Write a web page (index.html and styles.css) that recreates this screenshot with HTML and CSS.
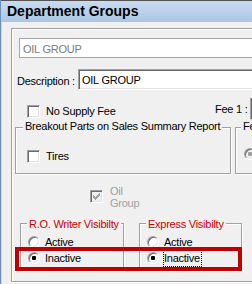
FILE: index.html
```html
<!DOCTYPE html>
<html lang="en">
<head>
    <meta charset="UTF-8" />
    <link rel="stylesheet" href="styles.css">
    <title>Department Groups</title>
</head>
<body>
    <div class="window">
        <div class="titlebar">Department Groups</div>
        <div class="client">
            <div class="panel">
                <div class="field field-disabled code-field">OIL GROUP</div>

                <div class="row desc-row">
                    <span class="desc-label">Description :</span>
                    <div class="field desc-field">OIL GROUP</div>
                </div>

                <div class="row fee-row">
                    <label class="check supply-check"><span class="box"></span>No Supply Fee</label>
                    <span class="fee-label">Fee 1 :</span>
                    <div class="field fee-field"></div>
                </div>

                <div class="row groups-row">
                    <fieldset class="group breakout-group">
                        <legend>Breakout Parts on Sales Summary Report</legend>
                        <label class="check tires-check"><span class="box"></span>Tires</label>
                    </fieldset>
                    <fieldset class="group fee-group">
                        <legend>Fee Type</legend>
                        <span class="radio disabled checked"></span>
                    </fieldset>
                </div>

                <div class="row oil-row">
                    <span class="box disabled">
                        <svg width="11" height="11" viewBox="0 0 11 11">
                            <path d="M8 2h1v1h-1z M7 3h2v1h-2z M2 4h1v1h-1z M6 4h3v1h-3z M2 5h2v1h-2z M5 5h3v1h-3z M2 6h5v1h-5z M3 7h3v1h-3z M4 8h1v1h-1z" fill="#a0a0a0"/>
                        </svg>
                    </span>
                    <span class="oil-text">Oil<br>Group</span>
                </div>

                <div class="row vis-row">
                    <fieldset class="group vis-group ro-group">
                        <legend>R.O. Writer Visibilty</legend>
                        <div class="option"><span class="radio"></span><span class="opt-text">Active</span></div>
                        <div class="option"><span class="radio checked"></span><span class="opt-text">Inactive</span></div>
                    </fieldset>
                    <fieldset class="group vis-group express-group">
                        <legend>Express Visibilty</legend>
                        <div class="option"><span class="radio"></span><span class="opt-text">Active</span></div>
                        <div class="option"><span class="radio checked"></span><span class="opt-text focused">Inactive</span></div>
                    </fieldset>
                </div>
            </div>
        </div>
        <div class="highlight"></div>
    </div>
</body>
</html>
```

FILE: styles.css
```css
* {
    box-sizing: border-box;
}
body {
    margin: 0;
    background-color: #f0f0f0;
    font-family: "Liberation Sans", Arial, sans-serif;
    font-size: 11px;
    letter-spacing: -0.25px;
    color: #000;
}
.window {
    position: relative;
    width: 252px;
    height: 284px;
    overflow: hidden;
    border-left: 1px solid #6f8fb5;
    box-shadow: inset 1px 0 0 #c3d6ec;
}
.titlebar {
    height: 22px;
    border-top: 1px solid #555;
    background: linear-gradient(#c9dcf0, #a9c6e5);
    padding-left: 6px;
    font-size: 14px;
    font-weight: bold;
    letter-spacing: 0;
    line-height: 21px;
    white-space: nowrap;
}
.client {
    padding: 6px 0 0 10px;
}
.panel {
    width: 400px;
    height: 254px;
    border: 1px solid #a0a0a0;
    box-shadow: inset 1px 1px 0 #fff, 0 1px 0 #fff;
}
.row {
    display: flex;
    align-items: flex-start;
}

/* text fields */
.field {
    background-color: #fff;
    white-space: nowrap;
    line-height: 13px;
}
.field-disabled {
    border: 1px solid #a5a5a5;
    color: #7a7a7a;
}
.code-field {
    margin: 9px 0 0 7px;
    width: 360px;
    height: 20px;
    padding: 4px 0 0 3px;
}
.desc-field,
.fee-field {
    border: 1px solid;
    border-color: #a0a0a0 #fff #fff #a0a0a0;
    box-shadow: inset 1px 1px 0 #696969, inset -1px -1px 0 #e3e3e3;
}
.desc-row {
    margin-top: 11px;
    height: 21px;
}
.desc-label {
    margin: 6px 0 0 5px;
    width: 61px;
    line-height: 13px;
    white-space: nowrap;
}
.desc-field {
    width: 300px;
    height: 21px;
    padding: 4px 0 0 3px;
}

/* checkbox and radio */
.check {
    display: flex;
    align-items: center;
    gap: 6px;
    line-height: 13px;
    white-space: nowrap;
}
.box {
    display: inline-block;
    flex: none;
    width: 13px;
    height: 13px;
    border: 1px solid;
    border-color: #a0a0a0 #fff #fff #a0a0a0;
    box-shadow: inset 1px 1px 0 #696969, inset -1px -1px 0 #e3e3e3;
    background-color: #fff;
}
.box svg {
    display: block;
}
.box.disabled {
    background-color: #f0f0f0;
}
.radio {
    position: relative;
    display: inline-block;
    flex: none;
    width: 12px;
    height: 12px;
    border-radius: 50%;
    border: 1px solid;
    border-color: #a0a0a0 #fff #fff #a0a0a0;
    box-shadow: inset 1px 1px 0 #696969, inset -1px -1px 0 #e3e3e3;
    background-color: #fff;
}
.radio.checked::after {
    content: "";
    position: absolute;
    left: 3px;
    top: 3px;
    width: 4px;
    height: 4px;
    border-radius: 1px;
    background-color: #000;
}
.radio.disabled {
    background-color: #f0f0f0;
}
.radio.disabled::after {
    background-color: #a0a0a0;
}

/* fee row */
.fee-row {
    margin-top: 8px;
    height: 22px;
}
.supply-check {
    margin: 7px 0 0 15px;
    width: 188px;
}
.fee-label {
    margin-top: 5px;
    width: 35px;
    line-height: 13px;
    white-space: nowrap;
}
.fee-field {
    width: 60px;
    height: 22px;
}

/* group boxes */
.group {
    margin: 0;
    padding: 0;
    min-width: 0;
    border: 1px solid #a0a0a0;
    box-shadow: inset 1px 1px 0 #fff, 1px 1px 0 #fff;
}
.group legend {
    margin-left: 7px;
    padding: 0 2px 2px;
    line-height: 13px;
    white-space: nowrap;
    background-color: #f0f0f0;
}
.groups-row {
    height: 54px;
}
.breakout-group {
    margin-left: 3px;
    width: 216px;
    height: 54px;
}
.tires-check {
    margin: 15px 0 0 11px;
}
.fee-group {
    margin-left: 4px;
    width: 100px;
    height: 54px;
}
.fee-group legend {
    margin-left: 5px;
}
.fee-group .radio {
    margin: 13px 0 0 8px;
}

/* oil group */
.oil-row {
    margin-top: 11px;
    height: 24px;
}
.oil-row .box {
    margin: 5px 0 0 78px;
}
.oil-text {
    margin-left: 7px;
    line-height: 12px;
    color: #a0a0a0;
}

/* visibility */
.vis-row {
    margin-top: 6px;
}
.vis-group {
    height: 56px;
    padding-top: 3px;
}
.vis-group legend {
    margin-left: 6px;
    padding: 3px 2px 0;
    color: #cc0000;
}
.ro-group {
    margin-left: 8px;
    width: 104px;
}
.express-group {
    margin-left: 15px;
    width: 103px;
}
.option {
    display: flex;
    align-items: flex-start;
    height: 16px;
    padding-left: 7px;
}
.option .radio {
    margin-top: 2px;
}
.opt-text {
    margin-left: 5px;
    line-height: 16px;
    white-space: nowrap;
}
.opt-text.focused {
    margin-left: 4px;
    border: 1px dotted #000;
    padding-right: 1px;
    line-height: 15px;
}

/* annotation frame */
.highlight {
    position: absolute;
    left: 14px;
    top: 247px;
    width: 227px;
    height: 24px;
    border: 4px solid #c00000;
}
```
